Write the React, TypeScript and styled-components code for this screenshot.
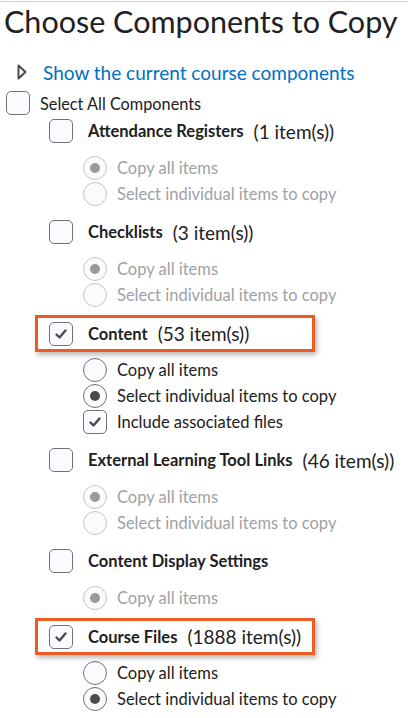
import styled, { createGlobalStyle } from "styled-components";

const GlobalStyle = createGlobalStyle`
    html, body {
        margin: 0;
        padding: 0;
        background: #fff;
    }
    body {
        font-family: Lato, "Noto Sans", sans-serif;
        color: #202122;
    }
`;

const Page = styled.div`
    width: 408px;
    height: 718px;
    overflow: hidden;
    box-sizing: border-box;
    border-top: 1px solid #d3d3d3;
    margin-top: 1px;
    padding-left: 6px;
`;

const Title = styled.h1`
    margin: 0;
    padding-top: 1px;
    font-size: 30.5px;
    font-weight: 400;
    line-height: 36px;
    color: #202122;
    margin-left: -2px;
`;

const ToggleRow = styled.div`
    display: flex;
    align-items: center;
    gap: 16px;
    margin-top: 18px;
    margin-left: 11px;
    height: 30px;
`;

const ShowLink = styled.a`
    font-size: 19px;
    color: #006fbf;
    text-decoration: none;
    cursor: pointer;
`;

const SelectAllRow = styled.label`
    display: flex;
    align-items: center;
    gap: 10px;
    height: 28px;
    margin-top: 2px;
    font-size: 16.3px;
`;

const Section = styled.div`
    margin-left: 43px;
`;

const HeaderRow = styled.div<{ $highlight?: boolean }>`
    display: flex;
    align-items: center;
    height: 28px;
    box-sizing: border-box;
    ${(p) =>
        p.$highlight &&
        `
        width: 280px;
        height: 37px;
        margin: -4px 0 -5px -14px;
        padding-left: 11px;
        border: 3px solid #ee5a24;
        box-shadow: 2px 3px 5px rgba(0, 0, 0, 0.28);
    `}
`;

const Name = styled.span`
    font-size: 16.5px;
    font-weight: 700;
    margin-left: 15px;
    color: #202122;
`;

const Count = styled.span`
    font-size: 19px;
    margin-left: 10px;
    color: #202122;
`;

const Options = styled.div`
    margin: 10px 0 11px 34px;
`;

const OptionRow = styled.div<{ $disabled?: boolean }>`
    display: flex;
    align-items: center;
    gap: 10px;
    height: 26px;
    font-size: 16.5px;
    color: ${(p) => (p.$disabled ? "#9ea2a5" : "#202122")};
`;

const Box = styled.span`
    width: 22px;
    height: 22px;
    flex: none;
    border: 1px solid #6e7376;
    border-radius: 5px;
    background: #f9fbff;
    display: flex;
    align-items: center;
    justify-content: center;
`;

const Radio = styled.span<{ $disabled?: boolean }>`
    width: 22px;
    height: 22px;
    flex: none;
    border-radius: 50%;
    border: 1px solid ${(p) => (p.$disabled ? "#c3c6c8" : "#6e7376")};
    background: #f9fbff;
    display: flex;
    align-items: center;
    justify-content: center;
`;

const Dot = styled.span<{ $disabled?: boolean }>`
    width: 10px;
    height: 10px;
    border-radius: 50%;
    background: ${(p) => (p.$disabled ? "#9a9a9a" : "#494c4e")};
`;

const Triangle = () => (
    <svg width="10" height="16" viewBox="0 0 10 16">
        <path d="M1.5 1.5 L8.5 8 L1.5 14.5 Z" fill="none" stroke="#494c4e" strokeWidth="2" strokeLinejoin="round" />
    </svg>
);

const Checkbox = ({ checked }: { checked?: boolean }) => (
    <Box>
        {checked ? (
            <svg width="14" height="14" viewBox="0 0 14 14">
                <path d="M2.5 7.5 L5.5 10.5 L11.5 3.5" fill="none" stroke="#494c4e" strokeWidth="2.4" strokeLinecap="round" strokeLinejoin="round" />
            </svg>
        ) : null}
    </Box>
);

type Opt = { label: string; kind: "radio" | "check"; on?: boolean };

type Component = {
    name: string;
    count?: string;
    checked?: boolean;
    options: Opt[];
};

const copyOpts = (on: "all" | "select"): Opt[] => [
    { label: "Copy all items", kind: "radio", on: on === "all" },
    { label: "Select individual items to copy", kind: "radio", on: on === "select" },
];

const components: Component[] = [
    { name: "Attendance Registers", count: "(1 item(s))", options: copyOpts("all") },
    { name: "Checklists", count: "(3 item(s))", options: copyOpts("all") },
    {
        name: "Content",
        count: "(53 item(s))",
        checked: true,
        options: [...copyOpts("select"), { label: "Include associated files", kind: "check", on: true }],
    },
    { name: "External Learning Tool Links", count: "(46 item(s))", options: copyOpts("all") },
    { name: "Content Display Settings", options: [{ label: "Copy all items", kind: "radio", on: true }] },
    { name: "Course Files", count: "(1888 item(s))", checked: true, options: copyOpts("select") },
];

const App: React.FC = () => {
    return (
        <>
            <GlobalStyle />
            <Page>
                <Title>Choose Components to Copy</Title>
                <ToggleRow>
                    <Triangle />
                    <ShowLink>Show the current course components</ShowLink>
                </ToggleRow>
                <SelectAllRow>
                    <Checkbox />
                    Select All Components
                </SelectAllRow>
                {components.map((c) => {
                    const disabled = !c.checked;
                    return (
                        <Section key={c.name}>
                            <HeaderRow $highlight={c.checked}>
                                <Checkbox checked={c.checked} />
                                <Name>{c.name}</Name>
                                {c.count ? <Count>{c.count}</Count> : null}
                            </HeaderRow>
                            <Options>
                                {c.options.map((o) => (
                                    <OptionRow key={o.label} $disabled={disabled}>
                                        {o.kind === "radio" ? (
                                            <Radio $disabled={disabled}>
                                                {o.on ? <Dot $disabled={disabled} /> : null}
                                            </Radio>
                                        ) : (
                                            <Checkbox checked={o.on} />
                                        )}
                                        {o.label}
                                    </OptionRow>
                                ))}
                            </Options>
                        </Section>
                    );
                })}
            </Page>
        </>
    );
};

export default App;
